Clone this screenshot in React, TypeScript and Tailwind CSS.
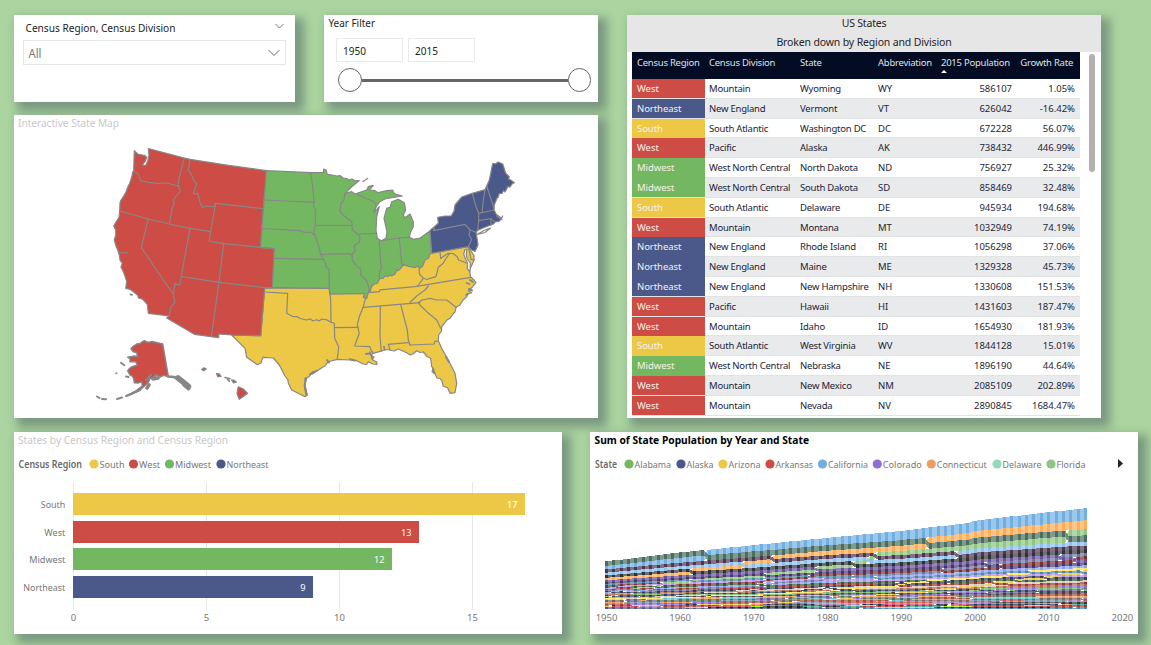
import React from "react";

const FONT = '"Noto Sans", "Open Sans", sans-serif';
const RED = "#cd4c46";
const BLUE = "#4a588a";
const YELLOW = "#ecc846";
const GREEN = "#74b761";

type TProps = {
  x: number;
  y: number;
  w?: number;
  fill?: string;
  size?: number;
  weight?: number;
  anchor?: "start" | "middle" | "end";
  children: string;
};

function T({ x, y, w, fill = "#777777", size = 10, weight = 400, anchor = "start", children }: TProps) {
  return (
    <text
      x={x}
      y={y}
      fill={fill}
      fontSize={size}
      fontWeight={weight}
      textAnchor={anchor}
      textLength={w}
      lengthAdjust="spacingAndGlyphs"
    >
      {children}
    </text>
  );
}

function Card({ className, children }: { className: string; children: React.ReactNode }) {
  return (
    <section className={`shrink-0 bg-white shadow-[6px_6px_9px_3px_rgba(28,39,66,0.34)] ${className}`}>
      {children}
    </section>
  );
}

/* ---------- slicers ---------- */

function RegionSlicer() {
  return (
    <Card className="h-[87px] w-[281px]">
      <div className="flex h-[25px] items-center justify-between pl-3 pr-[11px]">
        <svg width="152" height="16" className="overflow-visible">
          <T x={-0.5} y={11.5} w={150} size={11} fill="#252423">Census Region, Census Division</T>
        </svg>
        <svg width="9" height="6" className="-mt-1" fill="none" stroke="#777">
          <path d="M.5 1 4.5 5l4-4" />
        </svg>
      </div>
      <div className="ml-[9px] flex h-[25px] w-[263px] items-center justify-between border border-[#e6e6e6] pl-1 pr-[5px]">
        <svg width="20" height="16" className="overflow-visible">
          <T x={0.5} y={13} w={13} size={11.8} fill="#777">All</T>
        </svg>
        <svg width="12" height="8" fill="none" stroke="#666">
          <path d="M.5 1 6 6.5 11.5 1" />
        </svg>
      </div>
    </Card>
  );
}

function YearSlicer() {
  return (
    <Card className="h-[87px] w-[274px]">
      <svg width="120" height="23" className="block">
        <T x={4.5} y={12} w={46.5} size={10.8} fill="#252423">Year Filter</T>
      </svg>
      <div className="ml-[11.5px] flex gap-[5px]">
        {["1950", "2015"].map((y) => (
          <div key={y} className="h-6 w-[67px] border border-[#eaeaea]">
            <svg width="60" height="22" className="block">
              <T x={6} y={16} w={23} size={10.8} fill="#252423">{y}</T>
            </svg>
          </div>
        ))}
      </div>
      <div className="ml-[14px] mt-[6px] flex h-6 w-[253px] items-center">
        <div className="size-[23.5px] rounded-full border-[1.5px] border-[#666]" />
        <div className="h-[3px] grow bg-[#666]" />
        <div className="size-[23.5px] rounded-full border-[1.5px] border-[#666]" />
      </div>
    </Card>
  );
}

/* ---------- map ---------- */

const WEST =
  "134.3,150.7 134,160 133.7,171 132.7,172 131.5,178 129.7,183.3 127.8,187 126,192 123.3,196.7 120.5,201 120,203.3 119.7,211 119,217.3 116,222 113.7,226 115.7,230 115.8,235 114.3,240 116,246 117.7,250 119.3,255 120,260 122.3,263.3 121,267.3 123,271 125,276 126.7,281.7 125.7,288.3 130,289.3 133.3,291.7 137.7,295.3 138.5,298 142.7,299.3 147.3,304.3 148.3,313.3 169,316 166.7,318 194.3,334.3 211.3,336.7 218.7,337.7 218.7,334 231.7,335 260.7,335.7 264.7,288 272.7,287.7 274.3,248.7 260.7,247.3 261.7,228.5 263.3,208.7 266.7,170.7 228.3,165.3 190,159.3 184.3,158 148.3,148.5 149,155 147.7,161 145.7,165.5 142.3,165 145,161.7 146.7,157.3 145,155.7 137.7,154";

const MIDWEST =
  "266.3,170.7 310.7,172.7 323.3,172.7 323.7,169 326,170 327.3,174.3 332,175 336.7,176 340,175.5 343,178 346.7,178.5 349,180 352,179 355,180.8 359.3,180.5 351.7,186.7 345,193.3 351.7,191.7 355,194 366.7,190 368.3,186.7 373.3,185.3 369.3,190 374,190.3 378.3,192.7 386.7,190.7 392.7,190 393.5,192.8 396,194.3 402.3,196 393.3,197.3 385,199 380,201.5 376.7,206 374,211 374,212.7 379.3,206.7 376.7,216.7 376,230 377.3,238.3 381.3,240.7 386,238.3 387,231.7 384,218.3 386.7,208.3 390,207.3 391.7,201.7 398.3,199.3 404.3,202.7 405.7,210 403.3,215 405,217.7 410,214 413.3,221.7 413.3,226.7 410.7,231.7 409.3,237.3 413.3,239.3 420,238 430,231 431.3,252.7 429.3,255 428.8,258 425,260 422.7,266 420,268.3 417,266 415,267.7 410,266.7 406,265.7 403.3,264 401,268 398.3,270.7 397,270 395,274 391.7,276 390,274.8 388,276.5 385,276 383,278.5 380,278.3 377.3,283.3 374,284 371.7,286 370,291.7 368.3,292.7 366.7,298.3 363.3,297.3 364.7,293.3 330,294 329.3,288.3 272.3,287.3 274.3,248.7 260.7,247.3";

const NORTHEAST =
  "430,230.5 438.3,223.3 437.7,217.3 445,216 451,216 454,211.3 455,205 461.7,197 472.3,193.3 485,189.7 486.7,186 489.3,180 490.7,173.3 492.7,163.3 495,164 498.3,162 502.7,164 505.7,173.3 509.3,176.7 508.5,179 510.7,180 514.3,182.7 512,184 510,187.3 508,186.3 506.7,189 505,192 503.3,190.7 502,193.5 499.3,193.5 498,197.5 497,198.3 494.3,205 494,210 496.7,215 501.7,218.3 502.7,216 500,220.5 498.3,221.7 496,221.3 493.3,224 485,227.3 478.3,230 476,232 477.3,240 478,245 475,251.5 471.7,250 468.3,246.7 431.7,253.3";

const SOUTH =
  "264.7,288 329.3,288.3 330,294 364.7,293.3 380,278 410,262 429,252 468.3,246.7 471,251 474,255.5 474,260 471,267 469.3,270.5 470.7,277 474,280 476,282.7 472.7,286.7 468.3,290.7 471.7,292.7 468,294 466.7,296.7 463,300 460,305 456,307.3 455,312 453,314 450,318.3 447,320 441.7,326.7 441.5,331 438.7,335 438.3,340.7 441.7,348.3 448.3,360 455,373.3 456.7,383.3 455,392.7 450,393.3 447.5,387.5 443.3,386.5 442,381 440,378.3 437,378 435,374 432,371.5 433.5,368.5 431.7,366.7 430.7,358.3 427,356.5 423.3,352 420,352.5 416.7,350.7 413,354 410,355 406.7,352.7 398.3,349 394,351 390,350 386,349.5 382.7,350.7 373.3,353.3 371,355 374,357.3 372,359.5 376.7,362 377,364.3 372.7,364 368.3,361.7 366.5,364.5 363.3,364 356.7,360.7 350,360 337.3,359.3 331,361 328.3,361.7 325,366 321.7,367.7 317,371 312.7,372.7 309,376.5 306.7,378.3 305,385 307.3,395 305,396.7 291.7,390 288.3,383.3 288,380 285,376 279.3,365 273.3,358 262.7,357.3 261,363 257.3,364.7 246.7,357.3 245,348.3 231.7,335 260.7,335.7";

const BORDERS = [
  "133.7,171.5 136.7,172.7 139.3,176 140.3,180.7 148.3,182.3 158.3,183.7 166.7,183 178.3,186",
  "184.3,158 178.3,181.7 178.3,186 180.7,190.7 173.3,200 174.3,203.3 172.3,208.3 169.3,224",
  "119.7,211 148.3,219 169.3,224 190,228.3 210.7,231.7",
  "190,159.3 188.3,170 192.3,176 194.3,181.7 196.7,183.3 193.3,194 197.7,193.3 200,202.7 202.3,207.3 206.7,206 213.7,206.7 215.7,203.3",
  "215.7,203.3 210.7,231.7 209.3,241.3 223.7,243.7 260.7,247.3 274.3,248.7",
  "215.7,203.3 263.3,208.7",
  "223.7,243.7 219,282.3 211.3,336.7",
  "190,228.3 181.3,276.3 219,282.3 264.7,287.7 272.3,287.7",
  "148.3,219 141.3,247.3 163.3,280 173.3,294.3 175,302.3 171,306.7 169,316",
  "181.3,276.3 180,284 177.7,285 175,283.3 173.3,294.3",
  "119.7,251.7 122,253 127.7,252.7",
  "264.3,200 314,202.3",
  "310.7,172.7 312.7,186.7 314,202.3 313.3,206 315.3,209.3 315.3,225.3 314,230 314,233.3",
  "261.7,228.5 300,230.7 304,232.3 310,232.3 315,235 318.3,245 320.7,254 323.3,259.3",
  "274.3,258.3 323.3,259.3 326,264 326,266.7 329,269.3 329.3,289.3",
  "315.3,225.3 352.3,225.3",
  "320.7,254.3 350,253.7 352.7,256",
  "345,193.3 344,200 340.7,204 340,211.7 344,215.7 351.7,221.7 352.3,230 357.3,233.7 360,237.3 359.3,242.3 354.3,245.7 355,251 351.7,255 352.7,261 357.3,266.7 360.7,269.3 360.7,275 366.7,281 368.3,286 369.3,291.7",
  "357.3,234 376.7,233.3",
  "356.7,194.3 368.3,199.3 374,201.7 376,205 375,210.7",
  "379.3,240.7 380.3,260 381.3,268.3 379.3,273.3 379.3,278.3",
  "381.3,240.7 399.3,238 409.3,237.3",
  "399.3,238 401.7,264",
  "362.7,181.7 367.7,178.3",
  "434.3,227.5 433.3,230.7 465,224.3 470,230 469,235 471.7,239.3 468.3,246.7",
  "470,230 476.7,232.7",
  "472.3,193.3 476,206.7 478.7,213.3 478.7,220.7 477.7,230",
  "485,189.7 483.3,200 482,212.7",
  "486.7,186 494,208.3",
  "478.7,213.3 494,210",
  "478.7,220.7 490.7,218.5 494,221.5",
  "490.7,219 491.3,225",
  "477.3,234.3 484,230.5 490.5,228 485,232.5 477.3,234.3",
  "497,216.5 502,219.5",
  "264.3,292 287.7,293.3 286.7,313.3 293.3,316.7 297,316.5 300,318.5 306.7,320 310,318.8 313,321 316.7,319.7 319,321 322,319 326.7,319.8 331,322.3 334.3,323.3 334.7,338.3 338.7,346.7 337.3,359.3",
  "329.3,289.3 330.7,300 331,322.3",
  "334.7,327.7 358.3,327.3",
  "366.7,297.7 365,300 363.3,306.7 359.3,316.7 357.3,325 359.3,333.3 354.7,346 370,346.7 371,350 373.3,353.3",
  "363.3,307.3 420,302.7",
  "380.3,306 380,336.7 381.3,351",
  "400.7,304.7 407.3,330 408.3,340 410,345",
  "390,350 388.3,344.3 408.5,342.7",
  "410,345 434,344 435,341 438.3,341.5",
  "368,292.7 379.3,291.7 380,289.8 415,286.7 470.7,277.3",
  "428.3,286 425,290 416.7,296 410,302.3",
  "418.3,302.7 422,300 430,298.3 436.7,300 446.7,300 456,307.3",
  "418.3,302.7 420,305 426.7,311.7 436.7,320 440.7,328.3",
  "417.3,286.5 423.3,278.3 419.5,274 419,269",
  "423.3,278.3 427,279.5 430,278.3 436,276.7 438.3,267.3 443.3,263.3 445,260 449.3,254",
  "440,251.7 440.7,258.5 444,256 448.3,253.3 453,253.5 457.3,256.7 458.5,260 463.3,261.7 466,263",
  "468.3,247 470,254 471,259.3 474.3,260",
];

const CHESAPEAKE = "465,249.5 463.7,254 465.5,259 467.5,263 467.3,269 470,271.5 470.3,263 467.3,259 466.2,254 467,249";

const ALASKA =
  "144.3,340.7 148,342.5 152,341.5 162.7,344 168.3,376.5 163.3,375.3 160,377 156.7,375 153,378.5 150,378.3 148.5,382 145.7,385 140,390 131.7,394 126.7,396 135,391.5 142.3,386 141.7,381.7 138,383 134.3,382.7 133.8,379 132.3,376 130,375 127.7,371 129,369 131,367.3 137.3,365 135.7,361.7 130,361.7 130,358.7 127.7,357.3 134.3,356 137.7,356.7 136.7,352.7 133,351.5 131,348.7 133,346.5 136.7,344 140,343.5";

function StateMap() {
  return (
    <Card className="h-[303px] w-[584px]">
      <svg width="584" height="303" viewBox="14 115 584 303" className="block">
        <T x={18} y={127} w={101} size={10.8} fill="#c8c8c8">Interactive State Map</T>
        <g stroke="#878787" strokeWidth={1.2} strokeLinejoin="round" strokeLinecap="round">
          <polygon points={SOUTH} fill={YELLOW} />
          <polygon points={WEST} fill={RED} />
          <polygon points={MIDWEST} fill={GREEN} />
          <polygon points={NORTHEAST} fill={BLUE} />
          <polygon points={CHESAPEAKE} fill="#fff" />
          {BORDERS.map((b) => (
            <polyline key={b} points={b} fill="none" />
          ))}
          <polygon points={ALASKA} fill={RED} strokeWidth={1.5} />
          <path d="M204 367.7l2.3 1.4-2.6 1.6-2-1.2zM216.5 373.5l2.6.3 2 2.6-3.4.2zM231.5 380l2.5 .2 2.500 2-3 .8zM238.3 386.7l5 2.3 4.3 4.3-4 3-4.3 3-1-2-1.3-4z" fill={RED} />
          <path d="M225 377.5l5 1.200m-2.500 1l2 1.500" strokeWidth={1.6} fill="none" />
          <path d="M168 376.5l6 .5 5 2.5" strokeWidth={2.6} fill="none" />
          <path d="M178 378l5 4 5.500 4.500" strokeWidth={5.5} fill="none" />
          <path d="M184 384.500l4.500 4" strokeWidth={4} fill="none" />
          <path d="M149 385l-2 3m6-9l5-1" strokeWidth={3.6} fill="none" />
          <path d="M146 380l5-5m2 3 3-3" strokeWidth={2} fill="none" />
          <path d="M140 390l-9 4-5 2M122 397.5l-5 1.500M106 399.300l-4-.300M99.500 398l-2.500-1.500M121 362.800l3.300 2.400M126 376.500l2.500.500M116.300 373.200l.2 0" strokeWidth={2} fill="none" />
          <path d="M130.500 294.300l1.500 .5" strokeWidth={1.8} fill="none" />
          <path d="M305.500 378l-.8 8 1.600 9M310 374l4-2.500M366 354l4-.5M327 360l2 2.500M350 359.300l5 1.200M446 357l3 5M433 369l1.500 4M469 289l3 1.500M470 280l3 2" strokeWidth={2} fill="none" />
          <path d="M312 374l5-3.500M370 352l2 6M384 346.500l.5 3.500M466 295l2-1.500M497 215l3 3M466.500 283l3 1" strokeWidth={1.600} fill="none" />
        </g>
      </svg>
    </Card>
  );
}

/* ---------- table ---------- */

type Region = "West" | "Northeast" | "South" | "Midwest";
const REGION_BG: Record<Region, string> = {
  West: "bg-[#cd4c46]",
  Northeast: "bg-[#4a588a]",
  South: "bg-[#ecc846]",
  Midwest: "bg-[#74b761]",
};

const ROWS: [Region, string, string, string, string, string][] = [
  ["West", "Mountain", "Wyoming", "WY", "586107", "1.05%"],
  ["Northeast", "New England", "Vermont", "VT", "626042", "-16.42%"],
  ["South", "South Atlantic", "Washington DC", "DC", "672228", "56.07%"],
  ["West", "Pacific", "Alaska", "AK", "738432", "446.99%"],
  ["Midwest", "West North Central", "North Dakota", "ND", "756927", "25.32%"],
  ["Midwest", "West North Central", "South Dakota", "SD", "858469", "32.48%"],
  ["South", "South Atlantic", "Delaware", "DE", "945934", "194.68%"],
  ["West", "Mountain", "Montana", "MT", "1032949", "74.19%"],
  ["Northeast", "New England", "Rhode Island", "RI", "1056298", "37.06%"],
  ["Northeast", "New England", "Maine", "ME", "1329328", "45.73%"],
  ["Northeast", "New England", "New Hampshire", "NH", "1330608", "151.53%"],
  ["West", "Pacific", "Hawaii", "HI", "1431603", "187.47%"],
  ["West", "Mountain", "Idaho", "ID", "1654930", "181.93%"],
  ["South", "South Atlantic", "West Virginia", "WV", "1844128", "15.01%"],
  ["Midwest", "West North Central", "Nebraska", "NE", "1896190", "44.64%"],
  ["West", "Mountain", "New Mexico", "NM", "2085109", "202.89%"],
  ["West", "Mountain", "Nevada", "NV", "2890845", "1684.47%"],
];

const GRID = "grid grid-cols-[73px_91px_78px_66px_72px_68px]";

function StatesTable() {
  return (
    <Card className="h-[403px] w-[474px]">
      <div className="flex h-[37px] flex-col items-center bg-[#e6e6e6] text-[10.5px] text-[#252423]">
        <div className="h-[19px] leading-[17px] tracking-[-0.2px]">US States</div>
        <div className="leading-[17px] tracking-[-0.15px]">Broken down by Region and Division</div>
      </div>
      <div className="flex pl-[5px]">
        <div className="w-[448px] text-[9.5px]">
          <div className={`${GRID} h-[27px] bg-[#040c24] pt-[4px] leading-[14px] tracking-[-0.25px] text-[#dfe1e5]`}>
            <div className="pl-[5px]">Census Region</div>
            <div className="pl-[4px]">Census Division</div>
            <div className="pl-[4px]">State</div>
            <div className="pl-[4px]">Abbreviation</div>
            <div className="whitespace-nowrap pl-[1px]">
              2015 Population
              <div className="size-0 border-x-[3px] border-b-[3px] border-x-transparent border-b-white" />
            </div>
            <div className="pr-[7px] text-right">Growth Rate</div>
          </div>
          {ROWS.map((r, i) => (
            <div
              key={r[2]}
              className={`${GRID} h-[19.8px] border-b border-[#e2e3e4] leading-[19.4px] text-[#1c2438] ${i % 2 ? "bg-[#e9eaec]" : "bg-white"}`}
            >
              <div className={`pl-[5px] tracking-[-0.05px] text-[#f4f1ec] ${REGION_BG[r[0]]}`}>{r[0]}</div>
              <div className="whitespace-nowrap pl-[4px] tracking-[-0.22px]">{r[1]}</div>
              <div className="whitespace-nowrap pl-[4px] tracking-[-0.22px]">{r[2]}</div>
              <div className="pl-[4px]">{r[3]}</div>
              <div className="text-right">{r[4]}</div>
              <div className="pr-[5px] text-right">{r[5]}</div>
            </div>
          ))}
        </div>
        <div className="ml-[9px] mt-[2px] h-[118px] w-[6px] rounded-full bg-[#b3b0ad]" />
      </div>
    </Card>
  );
}

/* ---------- bar chart ---------- */

const BARS = [
  { name: "South", value: 17, end: 525, y: 493, color: YELLOW, w: 24.5 },
  { name: "West", value: 13, end: 419, y: 521, color: RED, w: 21 },
  { name: "Midwest", value: 12, end: 392, y: 548, color: GREEN, w: 36 },
  { name: "Northeast", value: 9, end: 313, y: 576, color: BLUE, w: 42 },
];

function RegionBars() {
  const legend: [number, string, string, number][] = [
    [94, "South", YELLOW, 25],
    [133.5, "West", RED, 21],
    [169.5, "Midwest", GREEN, 36],
    [221, "Northeast", BLUE, 42],
  ];
  return (
    <Card className="h-[202px] w-[548px]">
      <svg width="548" height="202" viewBox="14 432 548 202" className="block">
        <T x={18} y={444} w={210} size={10.8} fill="#c8c8c8">States by Census Region and Census Region</T>
        <T x={18.5} y={468} w={63.5} size={9.8} weight={600} fill="#6a6a6a">Census Region</T>
        {legend.map(([x, name, color, w]) => (
          <g key={name}>
            <circle cx={x} cy={464} r={4.6} fill={color} />
            <T x={x + 5.5} y={468} w={w} size={9.8}>{name}</T>
          </g>
        ))}
        {[0, 5, 10, 15].map((v, i) => (
          <g key={v}>
            <rect x={73 + i * 133} y={482} width={1} height={128} fill="#e6e6e6" />
            <T x={73.5 + i * 133} y={621} size={9.5} anchor="middle">{String(v)}</T>
          </g>
        ))}
        {BARS.map((b) => (
          <g key={b.name}>
            <rect x={73} y={b.y} width={b.end - 73} height={22} fill={b.color} />
            <T x={65.300 - b.w} y={b.y + 15} w={b.w} size={9.8}>{b.name}</T>
            <T x={b.end - 7.5} y={b.y + 15} size={9.2} anchor="end" fill="#fff">{String(b.value)}</T>
          </g>
        ))}
      </svg>
    </Card>
  );
}

/* ---------- ribbon chart ---------- */

const YEARS = [1950, 1960, 1970, 1980, 1990, 2000, 2010, 2015];

// Colour and resident population in millions for each entry of YEARS.
const STATES: [string, number[]][] = [
  ["#71afe2", [10.6, 15.9, 20.0, 23.7, 29.8, 34.0, 37.3, 39.0]],
  ["#ffae57", [7.7, 9.6, 11.2, 14.2, 17.0, 20.9, 25.2, 27.4]],
  ["#8fc680", [2.8, 4.95, 6.8, 9.7, 12.9, 16.0, 18.8, 20.2]],
  ["#4a6f5f", [14.8, 16.8, 18.2, 17.6, 18.0, 19.0, 19.4, 19.75]],
  ["#8cc0ee", [8.7, 10.1, 11.1, 11.4, 11.43, 12.42, 12.84, 12.86]],
  ["#4f3550", [10.5, 11.3, 11.8, 11.86, 11.9, 12.28, 12.7, 12.8]],
  ["#2e3338", [7.9, 9.7, 10.66, 10.8, 10.85, 11.36, 11.54, 11.6]],
  ["#6d75a6", [3.4, 3.9, 4.6, 5.5, 6.5, 8.2, 9.7, 10.2]],
  ["#7d2f30", [4.1, 4.6, 5.1, 5.9, 6.6, 8.1, 9.5, 10.05]],
  ["#69509c", [6.4, 7.8, 8.9, 9.26, 9.3, 9.95, 9.88, 9.92]],
  ["#46356b", [4.8, 6.1, 7.2, 7.37, 7.75, 8.4, 8.8, 8.96]],
  ["#88a1ee", [3.3, 4.0, 4.65, 5.35, 6.2, 7.1, 8.0, 8.4]],
  ["#ffe255", [2.4, 2.85, 3.4, 4.1, 4.9, 5.9, 6.7, 7.2]],
  ["#ecc846", [0.75, 1.3, 1.8, 2.7, 3.7, 5.16, 6.4, 6.83]],
  ["#4f86a8", [4.7, 5.15, 5.7, 5.74, 6.0, 6.35, 6.55, 6.8]],
  ["#363a52", [3.3, 3.57, 3.9, 4.6, 4.9, 5.7, 6.35, 6.6]],
  ["#b593e6", [3.9, 4.66, 5.2, 5.49, 5.54, 6.1, 6.48, 6.6]],
  ["#355a38", [3.95, 4.3, 4.68, 4.92, 5.1, 5.6, 5.99, 6.08]],
  ["#d8c8ba", [2.3, 3.1, 3.9, 4.2, 4.8, 5.3, 5.77, 6.0]],
  ["#9c3430", [3.4, 3.95, 4.4, 4.7, 4.89, 5.36, 5.69, 5.77]],
  ["#8d6fd1", [1.3, 1.75, 2.2, 2.9, 3.3, 4.3, 5.0, 5.45]],
  ["#b0674f", [3.0, 3.4, 3.8, 4.1, 4.4, 4.9, 5.3, 5.5]],
  ["#66648f", [2.1, 2.4, 2.6, 3.1, 3.5, 4.0, 4.6, 4.9]],
  ["#74b761", [3.06, 3.27, 3.44, 3.9, 4.04, 4.45, 4.78, 4.86]],
  ["#29425e", [2.7, 3.26, 3.6, 4.2, 4.2, 4.47, 4.53, 4.67]],
  ["#4c3d48", [2.9, 3.04, 3.2, 3.66, 3.69, 4.04, 4.34, 4.42]],
  ["#a34b3e", [1.5, 1.77, 2.1, 2.6, 2.84, 3.42, 3.83, 4.03]],
  ["#54715c", [2.2, 2.33, 2.56, 3.0, 3.15, 3.45, 3.75, 3.91]],
  ["#ee9e64", [2.0, 2.5, 3.0, 3.1, 3.29, 3.4, 3.57, 3.59]],
  ["#5cbfc4", [2.62, 2.76, 2.8, 2.9, 2.78, 2.93, 3.05, 3.12]],
  ["#a678ae", [0.69, 0.89, 1.06, 1.46, 1.7, 2.23, 2.76, 3.0]],
  ["#cd4c46", [1.9, 1.79, 1.92, 2.3, 2.35, 2.67, 2.9, 2.98]],
  ["#74645c", [2.18, 2.2, 2.2, 2.5, 2.57, 2.84, 2.97, 2.99]],
  ["#383c3c", [0.16, 0.29, 0.49, 0.8, 1.2, 2.0, 2.7, 2.89]],
  ["#7b90ab", [1.9, 2.18, 2.25, 2.36, 2.48, 2.7, 2.85, 2.9]],
  ["#d04f78", [0.68, 0.95, 1.02, 1.3, 1.5, 1.8, 2.06, 2.09]],
  ["#27304a", [1.3, 1.4, 1.48, 1.57, 1.58, 1.7, 1.83, 1.9]],
  ["#ef8a58", [2.0, 1.86, 1.74, 1.95, 1.79, 1.81, 1.85, 1.84]],
  ["#3aa48a", [0.59, 0.67, 0.71, 0.94, 1.0, 1.3, 1.57, 1.65]],
  ["#9df000", [0.5, 0.63, 0.77, 0.96, 1.1, 1.21, 1.36, 1.43]],
  ["#222222", [0.53, 0.6, 0.74, 0.92, 1.1, 1.24, 1.32, 1.33]],
  ["#2e4cc4", [0.91, 0.97, 0.99, 1.12, 1.23, 1.27, 1.33, 1.33]],
  ["#b03c38", [0.79, 0.86, 0.95, 0.95, 1.0, 1.05, 1.05, 1.06]],
  ["#5b498f", [0.59, 0.67, 0.69, 0.79, 0.8, 0.9, 0.99, 1.03]],
  ["#95dabb", [0.32, 0.45, 0.55, 0.59, 0.67, 0.78, 0.9, 0.95]],
  ["#1c2136", [0.65, 0.68, 0.67, 0.69, 0.7, 0.75, 0.81, 0.86]],
  ["#707070", [0.62, 0.63, 0.62, 0.65, 0.64, 0.64, 0.67, 0.76]],
  ["#4a588a", [0.14, 0.23, 0.3, 0.4, 0.55, 0.63, 0.71, 0.74]],
  ["#c24560", [0.8, 0.76, 0.76, 0.64, 0.61, 0.57, 0.6, 0.67]],
  ["#2c2c40", [0.38, 0.39, 0.44, 0.51, 0.56, 0.61, 0.63, 0.63]],
  ["#3d85c0", [0.29, 0.33, 0.33, 0.47, 0.45, 0.49, 0.56, 0.59]],
];

function populationAt(values: number[], year: number) {
  let k = 0;
  while (k < YEARS.length - 2 && year > YEARS[k + 1]) k++;
  const t = (year - YEARS[k]) / (YEARS[k + 1] - YEARS[k]);
  // Estimates drift below the count until the 2000 census corrects them.
  const drift = year > 1990 && year < 2000 ? 1 - 0.018 * t : 1;
  return (values[k] + (values[k + 1] - values[k]) * t) * drift;
}

type Segment = { top: number; bottom: number };

function stackFor(year: number): Segment[] {
  const pops = STATES.map(([, v], i) => ({ i, p: populationAt(v, year) })).sort((a, b) => a.p - b.p);
  const out: Segment[] = [];
  let y = 608.5;
  for (const { i, p } of pops) {
    const h = p * 0.312;
    out[i] = { top: y - h, bottom: y };
    y -= h;
  }
  return out;
}

function PopulationRibbon() {
  const years = Array.from({ length: 66 }, (_, i) => 1950 + i);
  const stacks = years.map(stackFor);
  const xs = years.map((_, i) => Math.round(605 + i * 7.37));
  const legend: [number, string, string, number][] = [
    [629, "Alabama", "#74b761", 36.5],
    [681, "Alaska", "#4a588a", 27],
    [723, "Arizona", "#ecc846", 32],
    [770, "Arkansas", "#cd4c46", 37.5],
    [822.500, "California", "#71afe2", 40],
    [877.300, "Colorado", "#8d6fd1", 39],
    [931.300, "Connecticut", "#ee9e64", 50],
    [997, "Delaware", "#95dabb", 39],
    [1051, "Florida", "#8fc680", 29],
  ];
  return (
    <Card className="h-[202px] w-[548px]">
      <svg width="548" height="202" viewBox="590 432 548 202" className="block">
        <T x={594.5} y={444} w={214.5} size={10.8} weight={700} fill="#000">Sum of State Population by Year and State</T>
        <T x={595} y={468} w={22} size={9.8} weight={600} fill="#6a6a6a">State</T>
        {legend.map(([x, name, color, w]) => (
          <g key={name}>
            <circle cx={x} cy={464} r={4.6} fill={color} />
            <T x={x + 5.500} y={468} w={w} size={9.8}>{name}</T>
          </g>
        ))}
        <path d="M1118 459v9l5-4.500z" fill="#222" />
        <g shapeRendering="crispEdges">
          {stacks.slice(0, -1).map((s, k) =>
            s.map((a, i) => {
              const b = stacks[k + 1][i];
              const x0 = xs[k] + 3;
              const x1 = xs[k + 1];
              return (
                <polygon
                  key={`${k}-${i}`}
                  points={`${x0},${a.top} ${x1},${b.top} ${x1},${b.bottom} ${x0},${a.bottom}`}
                  fill={STATES[i][0]}
                  fillOpacity={0.7}
                />
              );
            }),
          )}
          {stacks.map((s, k) =>
            s.map((a, i) => (
              <rect key={`${k}-${i}`} x={xs[k]} y={a.top} width={3} height={a.bottom - a.top} fill={STATES[i][0]} />
            )),
          )}
        </g>
        {[1950, 1960, 1970, 1980, 1990, 2000, 2010, 2020].map((y, i) => (
          <T key={y} x={606.500 + i * 73.700} y={621} size={9.500} anchor="middle">{String(y)}</T>
        ))}
      </svg>
    </Card>
  );
}

export default function App() {
  return (
    <main
      className="flex h-[645px] w-[1151px] flex-col gap-[14px] overflow-hidden bg-[#abd4a0] pl-[14px] pt-[15px]"
      style={{ fontFamily: FONT }}
    >
      <div className="flex gap-[29px]">
        <div className="flex flex-col gap-[13px]">
          <div className="flex gap-[29px]">
            <RegionSlicer />
            <YearSlicer />
          </div>
          <StateMap />
        </div>
        <StatesTable />
      </div>
      <div className="flex gap-[28px]">
        <RegionBars />
        <PopulationRibbon />
      </div>
    </main>
  );
}
